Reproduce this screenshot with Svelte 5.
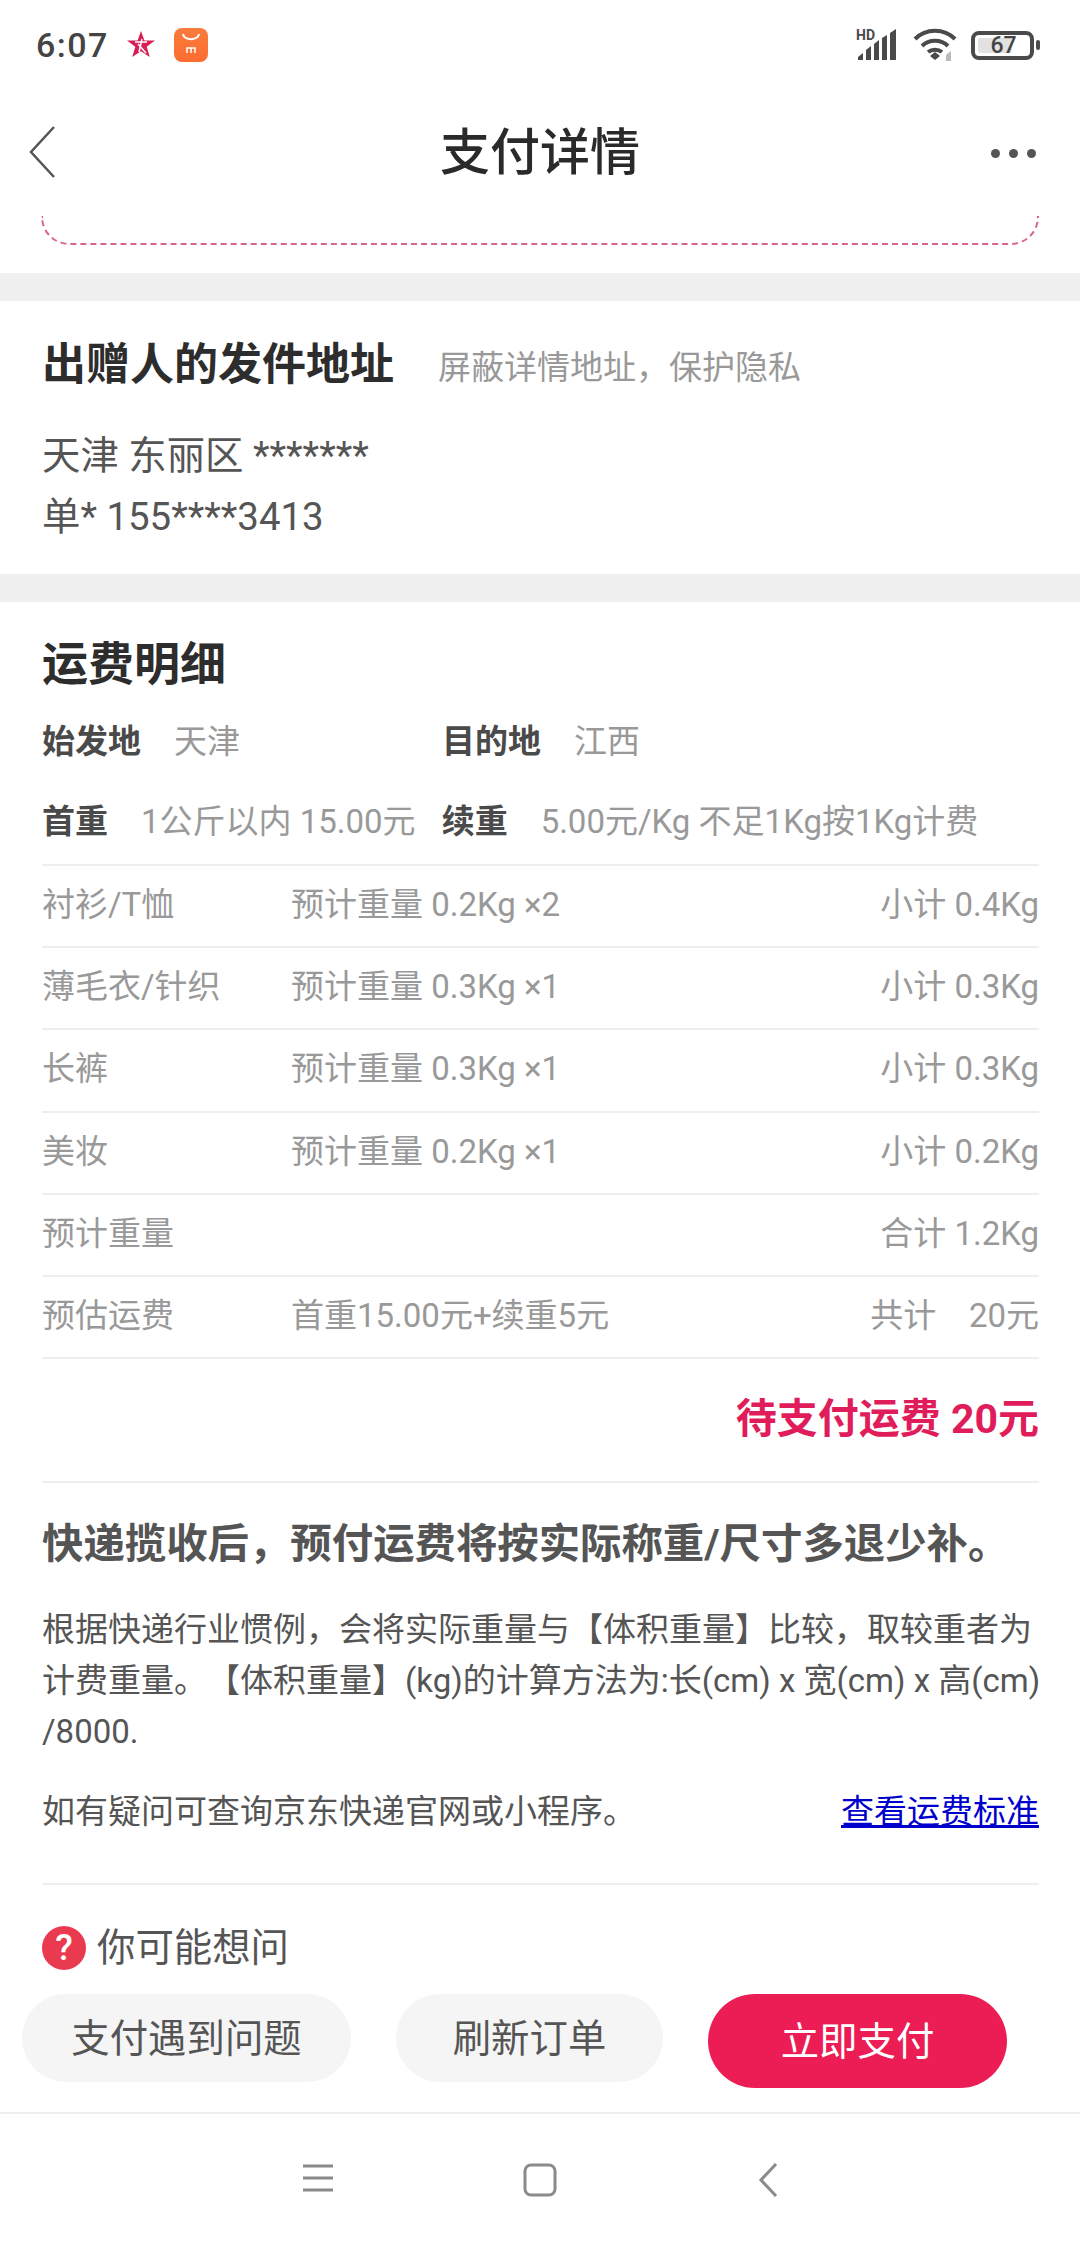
<script>
	const rows = [
		{ name: '衬衫/T恤', est: '预计重量 0.2Kg ×2', sum: '小计 0.4Kg' },
		{ name: '薄毛衣/针织', est: '预计重量 0.3Kg ×1', sum: '小计 0.3Kg' },
		{ name: '长裤', est: '预计重量 0.3Kg ×1', sum: '小计 0.3Kg' },
		{ name: '美妆', est: '预计重量 0.2Kg ×1', sum: '小计 0.2Kg' },
		{ name: '预计重量', est: '', sum: '合计 1.2Kg' },
		{ name: '预估运费', est: '首重15.00元+续重5元', sum: '共计\u00a0\u00a0\u00a0\u00a020元' }
	];
</script>

<div class="page">
	<div class="status">
		<span class="time">6:07</span>
		<svg class="star" width="28" height="28" viewBox="0 0 28 28">
			<path d="M14 0l3.400 9.500H28l-8.300 6.200 3.100 10.300L14 20.200 5.200 26l3.100-10.300L0 9.500h10.600z" fill="#d81e55" />
			<path d="M8 11h12M15 8l-3 13M11 13l8 9" stroke="#fff" stroke-width="1.500" fill="none" />
		</svg>
		<span class="mi">
			<svg width="34" height="34" viewBox="0 0 34 34">
				<path d="M9 6c1 7 15 7 16 0" stroke="#fff" stroke-width="2" fill="none" />
				<path d="M13 25v-5h8v5M17 20v5" stroke="#fff" stroke-width="1.500" fill="none" />
			</svg>
		</span>
		<span class="grow"></span>
		<svg class="signal" width="44" height="34" viewBox="0 0 44 34">
			<text x="0" y="12" class="hd">HD</text>
			<path d="M2 32v-3l5-4v7zM10 32V22l5-4v14zM18 32V16l5-4v20zM26 32V10l5-3v25zM34 32V5l6-4v31z" fill="#4a4a4a" />
		</svg>
		<svg class="wifi" width="44" height="34" viewBox="0 0 44 34">
			<path d="M2 11c11-11 29-11 40 0M9 18c7-7 19-7 26 0M15 24c4-3 10-3 14 0" stroke="#4a4a4a" stroke-width="4" fill="none" />
			<path d="M17 28l5-4 5 4-5 4z" fill="#4a4a4a" />
			<path d="M33 27l5-4v10h-5z" fill="#bbb" />
		</svg>
		<span class="battery"><span class="level"></span><span class="pct">67</span></span>
		<span class="nub"></span>
	</div>

	<div class="nav">
		<svg class="back" width="28" height="52" viewBox="0 0 28 52">
			<path d="M26 1L3 26l23 25" stroke="#555" stroke-width="2.500" fill="none" />
		</svg>
		<h1>支付详情</h1>
		<span class="dots"><i></i><i></i><i></i></span>
	</div>

	<div class="scroll">
		<div class="ticket-wrap"><div class="ticket"></div></div>
		<div class="band"></div>

		<section class="sender">
			<div class="sender-head">
				<h2>出赠人的发件地址</h2>
				<span class="hint">屏蔽详情地址，保护隐私</span>
			</div>
			<p class="addr">天津 东丽区 *******<br />单* 155****3413</p>
		</section>
		<div class="band"></div>

		<section class="fee">
			<h2 class="fee-title">运费明细</h2>
			<div class="route">
				<div class="half"><b>始发地</b><span>天津</span></div>
				<div class="half"><b>目的地</b><span>江西</span></div>
			</div>
			<div class="weights">
				<div class="half"><b>首重</b><span>1公斤以内 15.00元</span></div>
				<div class="half"><b>续重</b><span>5.00元/Kg 不足1Kg按1Kg计费</span></div>
			</div>
			<div class="table">
				{#each rows as row}
					<div class="row">
						<span>{row.name}</span>
						<span>{row.est}</span>
						<span>{row.sum}</span>
					</div>
				{/each}
			</div>
			<div class="due">待支付运费 20元</div>
			<div class="note">
				<h3>快递揽收后，预付运费将按实际称重/尺寸多退少补。</h3>
				<p>根据快递行业惯例，会将实际重量与【体积重量】比较，取较重者为<br />计费重量。【体积重量】(kg)的计算方法为:长(cm) x 宽(cm) x 高(cm)<br />/8000.</p>
				<div class="query">
					<span>如有疑问可查询京东快递官网或小程序。</span>
					<a href="#top">查看运费标准</a>
				</div>
			</div>
			<div class="faq">
				<span class="q">?</span>
				<span>你可能想问</span>
			</div>
		</section>
	</div>

	<div class="actions">
		<button class="soft help">支付遇到问题</button>
		<button class="soft refresh">刷新订单</button>
		<button class="pay">立即支付</button>
	</div>

	<div class="sysnav">
		<svg width="32" height="30" viewBox="0 0 32 30">
			<path d="M1 3h30M1 15h30M1 27h30" stroke="#8a8a8a" stroke-width="3" />
		</svg>
		<svg class="home" width="34" height="34" viewBox="0 0 34 34">
			<rect x="2" y="2" width="30" height="30" rx="6" stroke="#8a8a8a" stroke-width="3" fill="none" />
		</svg>
		<svg class="sysback" width="20" height="34" viewBox="0 0 20 34">
			<path d="M18 1L3 17l15 16" stroke="#8a8a8a" stroke-width="3" fill="none" />
		</svg>
	</div>
</div>

<style>
	:global(body) {
		margin: 0;
		background: #fff;
	}

	.page {
		width: 1080px;
		height: 2244px;
		display: flex;
		flex-direction: column;
		overflow: hidden;
		background: #fff;
		color: #333;
		font-family: Roboto, 'Noto Sans CJK SC', sans-serif;
		text-spacing-trim: space-all;
	}

	.status {
		height: 90px;
		flex: none;
		display: flex;
		align-items: center;
		padding: 0 40px 0 36px;
		box-sizing: border-box;
	}

	.time {
		font-size: 34px;
		font-weight: 500;
		letter-spacing: 1.500px;
		color: #444;
		width: 91px;
	}

	.mi {
		width: 34px;
		height: 34px;
		margin-left: 19px;
		border-radius: 8px;
		background: linear-gradient(#f97c3c, #fd6c30);
		display: flex;
	}

	.grow {
		flex: 1;
	}

	.hd {
		font-size: 14px;
		font-weight: 700;
		fill: #4a4a4a;
	}

	.wifi {
		margin-left: 13px;
	}

	.battery {
		position: relative;
		width: 63px;
		height: 29px;
		margin-left: 14px;
		border: 4px solid #4a4a4a;
		border-radius: 8px;
		box-sizing: border-box;
		display: flex;
		align-items: center;
		justify-content: center;
		padding-left: 2px;
	}

	.level {
		position: absolute;
		left: 3px;
		top: 3px;
		bottom: 3px;
		width: 34px;
		background: #e2e2e2;
		border-radius: 2px;
	}

	.pct {
		position: relative;
		font-size: 23px;
		font-weight: 500;
		line-height: 1;
		color: #444;
	}

	.nub {
		width: 4px;
		height: 10px;
		margin-left: 2px;
		background: #4a4a4a;
		border-radius: 2px;
	}

	.nav {
		height: 126px;
		flex: none;
		display: grid;
		grid-template-columns: 1fr auto 1fr;
		align-items: center;
		padding: 0 44px 0 28px;
		box-sizing: border-box;
	}

	.back {
		margin-top: -2px;
	}

	h1 {
		margin: 0;
		font-size: 50px;
		font-weight: 500;
		color: #2a2a2a;
		line-height: 68px;
		margin-left: 16px;
	}

	.dots {
		display: flex;
		gap: 9px;
		justify-self: end;
	}

	.dots i {
		width: 9px;
		height: 9px;
		border-radius: 50%;
		background: #555;
	}

	.scroll {
		flex: 1;
		min-height: 0;
		overflow: hidden;
	}

	.ticket-wrap {
		height: 57px;
		padding: 0 41px;
		box-sizing: border-box;
	}

	.ticket {
		height: 29px;
		box-sizing: border-box;
		border: 2px dashed #d9648a;
		border-top: none;
		border-radius: 0 0 28px 28px;
	}

	.band {
		height: 28px;
		background: #f0f0f0;
	}

	.sender {
		height: 273px;
		padding: 33px 41px 0 42px;
		box-sizing: border-box;
	}

	.sender-head {
		display: flex;
		align-items: center;
		gap: 44px;
	}

	h2 {
		margin: 0;
		font-size: 44px;
		line-height: 62px;
		font-weight: 700;
		color: #2d2d2d;
	}

	.hint {
		font-size: 33px;
		color: #999;
	}

	.addr {
		margin: 29px 0 0;
		font-size: 38.400px;
		line-height: 61px;
		color: #555;
	}

	.fee {
		padding: 31px 41px 0 42px;
	}

	h2.fee-title {
		font-size: 46px;
	}

	.route,
	.weights {
		display: flex;
		font-size: 33px;
		color: #999;
		white-space: nowrap;
	}

	.route {
		margin-top: 8px;
		height: 72px;
		align-items: center;
	}

	.weights {
		height: 87px;
		align-items: center;
		gap: 26px;
		border-bottom: 2px solid #eee;
		padding-bottom: 2px;
	}

	.route .half {
		width: 400px;
	}

	.half b {
		color: #4a4a4a;
		margin-right: 33px;
		font-weight: 700;
	}

	.row {
		display: grid;
		grid-template-columns: 249px 1fr auto;
		align-items: center;
		height: 80.200px;
		box-sizing: content-box;
		border-bottom: 2px solid #eee;
		font-size: 33px;
		color: #999;
	}

	.row span {
		padding-bottom: 8px;
	}

	.due {
		height: 124px;
		box-sizing: border-box;
		padding-bottom: 11px;
		display: flex;
		align-items: center;
		justify-content: flex-end;
		border-bottom: 2px solid #eee;
		font-size: 41px;
		font-weight: 700;
		color: #e01d5a;
	}

	.note {
		padding-top: 31px;
	}

	h3 {
		margin: 0;
		font-size: 41.400px;
		line-height: 60px;
		font-weight: 700;
		color: #555;
		white-space: nowrap;
	}

	.note p {
		margin: 30px 0 0;
		font-size: 33px;
		line-height: 51px;
		color: #555;
		white-space: nowrap;
	}

	.query {
		display: flex;
		justify-content: space-between;
		align-items: center;
		margin-top: 30px;
		padding-bottom: 46px;
		font-size: 33px;
		line-height: 50px;
		color: #555;
		border-bottom: 2px solid #eee;
	}

	.query a {
		color: #0000cc;
	}

	.faq {
		display: flex;
		align-items: center;
		gap: 11px;
		margin-top: 40px;
		font-size: 38.400px;
		line-height: 46px;
		color: #555;
	}

	.q {
		width: 44px;
		height: 44px;
		border-radius: 50%;
		background: #ea3a4f;
		color: #fff;
		font-size: 36px;
		font-weight: 500;
		line-height: 44px;
		text-align: center;
	}

	.actions {
		flex: none;
		height: 130px;
		box-sizing: border-box;
		padding: 10px 73px 0 22px;
		display: flex;
		align-items: flex-start;
		justify-content: space-between;
		border-bottom: 2px solid #eee;
		background: #fff;
	}

	button {
		border: none;
		font: inherit;
		font-size: 38.400px;
		border-radius: 47px;
		padding: 0 0 6px;
	}

	.soft {
		height: 88px;
		background: #f5f5f5;
		color: #555;
	}

	.help {
		width: 329px;
	}

	.refresh {
		width: 267px;
	}

	.pay {
		width: 299px;
		height: 94px;
		background: #ec1c54;
		color: #fff;
	}

	.sysnav {
		flex: none;
		height: 130px;
		box-sizing: border-box;
		display: flex;
		align-items: flex-start;
		padding: 49px 0 0 302px;
	}

	.home {
		margin-left: 189px;
	}

	.sysback {
		margin-left: 201px;
	}
</style>
